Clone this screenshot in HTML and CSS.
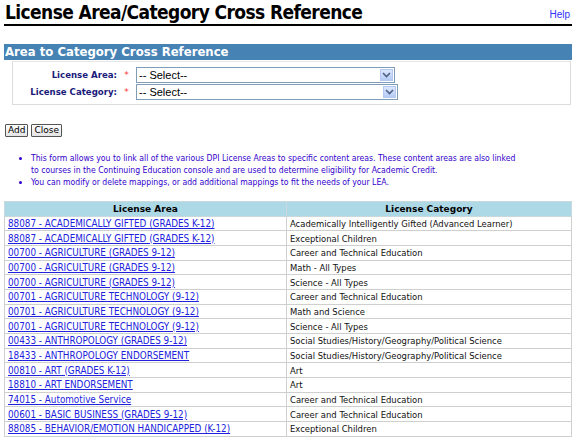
FILE: index.html
```html
<!DOCTYPE html>
<html>
<head>
<meta charset="utf-8">
<link rel="stylesheet" href="styles.css">
</head>
<body>
<div class="page">
  <div class="titlebar">
    <h1 class="title">License Area/Category Cross Reference</h1>
    <a class="help" href="#">Help</a>
  </div>
  <div class="section">Area to Category Cross Reference</div>
  <div class="formbox">
    <div class="frow">
      <label class="lbl">License Area:</label><span class="req">*</span>
      <div class="sel sel1"><span class="seltext">-- Select--</span><span class="selbtn"><svg width="9" height="6" viewBox="0 0 9 6"><path d="M1 1 L4.5 4.5 L8 1" fill="none" stroke="#4d6185" stroke-width="1.6"/></svg></span></div>
    </div>
    <div class="frow">
      <label class="lbl">License Category:</label><span class="req">*</span>
      <div class="sel sel2"><span class="seltext">-- Select--</span><span class="selbtn"><svg width="9" height="6" viewBox="0 0 9 6"><path d="M1 1 L4.5 4.5 L8 1" fill="none" stroke="#4d6185" stroke-width="1.6"/></svg></span></div>
    </div>
  </div>
  <div class="buttons">
    <button class="btn">Add</button><button class="btn">Close</button>
  </div>
  <ul class="notes">
    <li>This form allows you to link all of the various DPI License Areas to specific content areas. These content areas are also linked to courses in the Continuing Education console and are used to determine eligibility for Academic Credit.</li>
    <li>You can modify or delete mappings, or add additional mappings to fit the needs of your LEA.</li>
  </ul>
  <table class="grid">
    <thead>
      <tr><th class="c1">License Area</th><th class="c2">License Category</th></tr>
    </thead>
    <tbody>
      <tr><td><a href="#">88087 - ACADEMICALLY GIFTED (GRADES K-12)</a></td><td>Academically Intelligently Gifted (Advanced Learner)</td></tr>
      <tr><td><a href="#">88087 - ACADEMICALLY GIFTED (GRADES K-12)</a></td><td>Exceptional Children</td></tr>
      <tr><td><a href="#">00700 - AGRICULTURE (GRADES 9-12)</a></td><td>Career and Technical Education</td></tr>
      <tr><td><a href="#">00700 - AGRICULTURE (GRADES 9-12)</a></td><td>Math - All Types</td></tr>
      <tr><td><a href="#">00700 - AGRICULTURE (GRADES 9-12)</a></td><td>Science - All Types</td></tr>
      <tr><td><a href="#">00701 - AGRICULTURE TECHNOLOGY (9-12)</a></td><td>Career and Technical Education</td></tr>
      <tr><td><a href="#">00701 - AGRICULTURE TECHNOLOGY (9-12)</a></td><td>Math and Science</td></tr>
      <tr><td><a href="#">00701 - AGRICULTURE TECHNOLOGY (9-12)</a></td><td>Science - All Types</td></tr>
      <tr><td><a href="#">00433 - ANTHROPOLOGY (GRADES 9-12)</a></td><td>Social Studies/History/Geography/Political Science</td></tr>
      <tr><td><a href="#">18433 - ANTHROPOLOGY ENDORSEMENT</a></td><td>Social Studies/History/Geography/Political Science</td></tr>
      <tr><td><a href="#">00810 - ART (GRADES K-12)</a></td><td>Art</td></tr>
      <tr><td><a href="#">18810 - ART ENDORSEMENT</a></td><td>Art</td></tr>
      <tr><td><a href="#">74015 - Automotive Service</a></td><td>Career and Technical Education</td></tr>
      <tr><td><a href="#">00601 - BASIC BUSINESS (GRADES 9-12)</a></td><td>Career and Technical Education</td></tr>
      <tr><td><a href="#">88085 - BEHAVIOR/EMOTION HANDICAPPED (K-12)</a></td><td>Exceptional Children</td></tr>
    </tbody>
  </table>
</div>
</body>
</html>
```
FILE: styles.css
```css
html, body { margin: 0; padding: 0; background: #fff; }
body { font-family: "DejaVu Sans", Verdana, sans-serif; color: #222; }
.page { padding: 0 4px 0 4px; width: 568px; }

.titlebar { display: flex; justify-content: space-between; align-items: flex-end; border-bottom: 2px solid #000; height: 24px; }
.title { margin: 0; font-family: "DejaVu Sans Condensed", "DejaVu Sans", sans-serif; font-size: 19px; font-weight: bold; line-height: 24px; padding-left: 1px; color: #000; letter-spacing: -0.6px; }
.help { font-family: "Liberation Sans", Arial, sans-serif; font-size: 10px; color: #3030ff; text-decoration: none; margin-bottom: 4px; margin-right: 2px; }

.section { margin-top: 18px; background: #4682b4; color: #fff; font-family: "DejaVu Sans Condensed", "DejaVu Sans", sans-serif; font-weight: bold; font-size: 13px; line-height: 16px; height: 16px; padding-left: 1px; }

.formbox { margin: 1px 1px 0 8px; border: 1px solid #dcdcdc; border-top: 1px solid #e6e6e6; padding: 4px 0 4px 0; height: 34px; }
.frow { display: flex; align-items: center; height: 17px; }
.lbl { width: 104px; text-align: right; font-size: 8.6px; font-weight: bold; color: #1a1a7a; }
.req { color: #ff3333; font-size: 9px; width: 19px; text-align: center; margin-left: 0; }
.sel { box-sizing: border-box; height: 16px; border: 1px solid #7f9db9; display: flex; align-items: center; justify-content: space-between; background: #fff; }
.sel1 { width: 259px; }
.sel2 { width: 262px; }
.seltext { font-family: "Liberation Sans", Arial, sans-serif; font-size: 11px; padding-left: 2px; color: #000; }
.selbtn { width: 13px; height: 12px; margin-right: 1px; background: linear-gradient(#dce8fd, #b6cbf6); border: 1px solid #b5c8ef; box-sizing: border-box; display: flex; align-items: center; justify-content: center; }

.buttons { margin-top: 19px; display: flex; gap: 3px; padding-left: 1px; }
.btn { font-family: "DejaVu Sans", Verdana, sans-serif; font-size: 9px; height: 13px; padding: 0 2px; border: 1px solid #555; border-radius: 1px; background: linear-gradient(#fdfdfd, #e4e4e4); color: #000; line-height: 11px; }

.notes { margin: 16px 0 0 0; padding: 0 56px 0 27px; color: #3300cc; font-family: "DejaVu Sans Condensed", "DejaVu Sans", sans-serif; font-size: 8.6px; line-height: 11.5px; }
.notes li { margin-bottom: 1px; }

.grid { margin-top: 12px; width: 568px; border-collapse: collapse; font-family: "DejaVu Sans Condensed", "DejaVu Sans", sans-serif; font-size: 9.4px; }
.grid th { background: #add8e6; font-family: "DejaVu Sans", sans-serif; font-weight: bold; color: #000; height: 14px; padding: 0; border: 1px solid #c8d8dc; font-size: 9px; }
.grid td { height: 13.7px; padding: 0 3px; border: 1px solid #cfcfcf; color: #111; white-space: nowrap; }
.grid .c1 { width: 281px; }
.grid a { color: #2222dd; font-size: 9.8px; }
```
